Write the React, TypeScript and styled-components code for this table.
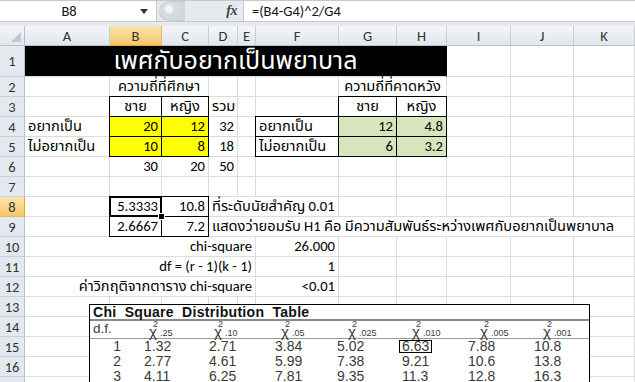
import React from "react";
import styled, { createGlobalStyle, css } from "styled-components";

const Global = createGlobalStyle`
  html, body { margin: 0; padding: 0; background: #fff; }
  body {
    width: 635px; height: 382px; overflow: hidden;
    font-family: Carlito, Calibri, Lato, "Noto Sans Thai", Tahoma, "DejaVu Sans", sans-serif;
  }
`;

const Window = styled.div`
  width: 635px;
  height: 382px;
  overflow: hidden;
  background: #e6e9ed;
  display: flex;
  flex-direction: column;
`;

const FormulaBar = styled.div`
  display: flex;
  height: 22px;
  box-sizing: border-box;
  border-top: 1px solid #c3c9d1;
  border-bottom: 1px solid #c3c9d1;
  background: #fff;
  flex: none;
`;

const NameBox = styled.div`
  width: 157px;
  display: flex;
  align-items: center;
  background: #fff;
  border-right: 1px solid #c3c9d1;
  box-sizing: border-box;
`;

const NameText = styled.span`
  flex: 1;
  text-align: center;
  font-size: 14.5px;
  color: #111;
  padding-left: 2px;
`;

const DropArrow = styled.svg`
  width: 8px;
  height: 5px;
  margin: 0 8px 0 4px;
`;

const FxArea = styled.div`
  width: 86px;
  display: flex;
  align-items: center;
  justify-content: space-between;
  background: #e6e9ed;
  box-sizing: border-box;
`;

const Knob = styled.div`
  width: 26px;
  height: 20px;
  margin-left: 2px;
  border-radius: 10px 0 0 10px;
  background: radial-gradient(circle at 9px 7px, #f4f6f8 0 3px, #d9dde2 5px, #cfd4da 100%);
  border: 1px solid #c6ccd3;
  border-right: none;
  box-sizing: border-box;
`;

const FxLabel = styled.span`
  font-family: "Liberation Serif", serif;
  font-style: italic;
  font-weight: bold;
  font-size: 14px;
  color: #444;
  margin-right: 6px;
  letter-spacing: -0.5px;
`;

const FormulaInput = styled.div`
  flex: 1;
  display: flex;
  align-items: center;
  padding-left: 8px;
  border-left: 1px solid #c3c9d1;
  font-size: 14.5px;
  color: #111;
  background: #fff;
`;

const Gap = styled.div`
  height: 4px;
  flex: none;
`;

const Sheet = styled.div`
  position: relative;
  display: grid;
  grid-template-columns: 25px 85px 52px 47px 29px 18px 83px 58px 50px 64px 63px 1fr;
  grid-template-rows: 20px 31px repeat(16, 20px);
  background: #fff;
  font-size: 14.67px;
  color: #000;
`;

const headerBase = css<{ $active?: boolean }>`
  box-sizing: border-box;
  display: flex;
  align-items: center;
  justify-content: center;
  color: #333;
  font-size: 14.5px;
  background: ${(p) =>
    p.$active ? "linear-gradient(#fbe3ad, #f6c86c)" : "linear-gradient(#f3f5f8, #e2e7ed)"};
`;

const Corner = styled.div`
  box-sizing: border-box;
  background: linear-gradient(#f3f5f8, #e2e7ed);
  border-right: 1px solid #b9c1cb;
  border-bottom: 1px solid #b9c1cb;
  display: flex;
  align-items: flex-end;
  justify-content: flex-end;
  padding: 0 3px 3px 0;
`;

const ColHeader = styled.div<{ $active?: boolean }>`
  ${headerBase};
  border-right: 1px solid ${(p) => (p.$active ? "#e9b85a" : "#c7cdd5")};
  border-bottom: 1px solid ${(p) => (p.$active ? "#e3a53b" : "#b9c1cb")};
`;

const RowHeader = styled.div<{ $active?: boolean }>`
  ${headerBase};
  background: ${(p) => (p.$active ? "linear-gradient(#fbe3ad, #f6c86c)" : "#e4e9ef")};
  border-right: 1px solid ${(p) => (p.$active ? "#e3a53b" : "#b9c1cb")};
  border-bottom: 1px solid ${(p) => (p.$active ? "#e9b85a" : "#c9d0d8")};
`;

type Align = "left" | "right" | "center";
type Fill = "yellow" | "green" | "black";

const fills: Record<Fill, string> = {
  yellow: "#ffff00",
  green: "#d7e4bc",
  black: "#000000",
};

const Cell = styled.div<{
  $span: number;
  $align: Align;
  $fill?: Fill;
  $box?: boolean;
  $active?: boolean;
  $big?: boolean;
}>`
  position: relative;
  grid-column: span ${(p) => p.$span};
  box-sizing: border-box;
  min-width: 0;
  border-right: 1px solid ${(p) => (p.$fill === "black" ? "#000" : "#dadcdd")};
  border-bottom: 1px solid #dadcdd;
  background: ${(p) => (p.$fill ? fills[p.$fill] : "transparent")};
  padding: 0 3px 1px;
  display: flex;
  align-items: flex-end;
  justify-content: ${(p) =>
    p.$align === "right" ? "flex-end" : p.$align === "center" ? "center" : "flex-start"};
  white-space: nowrap;
  line-height: 18px;
  color: ${(p) => (p.$fill === "black" ? "#fff" : "#000")};
  ${(p) =>
    p.$big &&
    css`
      font-size: 25px;
      line-height: 30px;
      align-items: center;
      padding: 0;
    `}
  ${(p) =>
    p.$box &&
    css`
      &::after {
        content: "";
        position: absolute;
        top: -1px;
        left: -1px;
        right: -1px;
        bottom: -1px;
        border: 1px solid #000;
        pointer-events: none;
      }
    `}
  ${(p) =>
    p.$active &&
    css`
      &::after {
        border-width: 2px;
        z-index: 2;
      }
      &::before {
        content: "";
        position: absolute;
        right: -4px;
        bottom: -4px;
        width: 5px;
        height: 5px;
        background: #000;
        border: 1px solid #fff;
        z-index: 3;
      }
    `}
`;

interface CellSpec {
  span?: number;
  text?: string;
  align?: Align;
  fill?: Fill;
  box?: boolean;
  active?: boolean;
  big?: boolean;
}

const COLS = ["A", "B", "C", "D", "E", "F", "G", "H", "I", "J", "K"];
const ROW_COUNT = 17;

const num = (text: string, extra: CellSpec = {}): CellSpec => ({ text, align: "right", ...extra });

const DATA: Record<number, Record<number, CellSpec>> = {
  1: { 0: { span: 8, text: "เพศกับอยากเป็นพยาบาล", align: "center", fill: "black", big: true } },
  2: {
    1: { span: 2, text: "ความถี่ที่ศึกษา", align: "center" },
    6: { span: 2, text: "ความถี่ที่คาดหวัง", align: "center" },
  },
  3: {
    1: { text: "ชาย", align: "center", box: true },
    2: { text: "หญิง", align: "center", box: true },
    3: { text: "รวม" },
    6: { text: "ชาย", align: "center", box: true },
    7: { text: "หญิง", align: "center", box: true },
  },
  4: {
    0: { text: "อยากเป็น" },
    1: num("20", { fill: "yellow", box: true }),
    2: num("12", { fill: "yellow", box: true }),
    3: num("32"),
    5: { text: "อยากเป็น", box: true },
    6: num("12", { fill: "green", box: true }),
    7: num("4.8", { fill: "green", box: true }),
  },
  5: {
    0: { text: "ไม่อยากเป็น" },
    1: num("10", { fill: "yellow", box: true }),
    2: num("8", { fill: "yellow", box: true }),
    3: num("18"),
    5: { text: "ไม่อยากเป็น", box: true },
    6: num("6", { fill: "green", box: true }),
    7: num("3.2", { fill: "green", box: true }),
  },
  6: { 1: num("30"), 2: num("20"), 3: num("50") },
  8: {
    1: num("5.3333", { box: true, active: true }),
    2: num("10.8", { box: true }),
    3: { span: 3, text: "ที่ระดับนัยสำคัญ 0.01" },
  },
  9: {
    1: num("2.6667", { box: true }),
    2: num("7.2", { box: true }),
    3: { span: 8, text: "แสดงว่ายอมรับ H1 คือ มีความสัมพันธ์ระหว่างเพศกับอยากเป็นพยาบาล" },
  },
  10: { 0: num("chi-square", { span: 5 }), 5: num("26.000") },
  11: { 0: num("df = (r - 1)(k - 1)", { span: 5 }), 5: num("1") },
  12: { 0: num("ค่าวิกฤติจากตาราง chi-square", { span: 5 }), 5: num("<0.01") },
};

/* ---------- Chi square table picture ---------- */

const ChiTable = styled.div`
  position: absolute;
  left: 89px;
  top: 278px;
  width: 501px;
  height: 110px;
  box-sizing: border-box;
  background: #fff;
  border: 1px solid #000;
  border-bottom: none;
  font-family: "Liberation Sans", Arial, sans-serif;
  color: #3a3a3a;
  z-index: 5;
`;

const ChiTitle = styled.div`
  height: 16px;
  box-sizing: border-box;
  border-bottom: 2px solid #8a8a8a;
  padding-left: 3px;
  font-weight: bold;
  font-size: 14px;
  line-height: 14px;
  word-spacing: 4px;
  letter-spacing: 0.3px;
  color: #111;
`;

const CHI_COLS = "48px 65px 66px 62px 65px 66px 66px 1fr";

const ChiHeadRow = styled.div`
  display: grid;
  grid-template-columns: ${CHI_COLS};
  height: 18px;
  box-sizing: border-box;
  border-bottom: 1px solid #9a9a9a;
`;

const ChiHeadCell = styled.div<{ $indent: number }>`
  display: flex;
  align-items: flex-start;
  padding-left: ${(p) => p.$indent}px;
`;

const DfLabel = styled.span`
  padding-left: 3px;
  align-self: center;
  font-size: 13.5px;
  line-height: 16px;
`;

const Chi = styled.span`
  display: inline-flex;
  flex-direction: column;
  align-items: center;
`;

const ChiSup = styled.span`
  font-size: 9px;
  line-height: 6px;
  margin: 0 0 0 5px;
`;

const ChiGlyph = styled.span`
  font-size: 15px;
  line-height: 9px;
  font-family: "Liberation Sans", sans-serif;
`;

const ChiSub = styled.span`
  align-self: flex-end;
  font-size: 9px;
  line-height: 8px;
  margin: 0 0 1px 2px;
`;

const ChiRow = styled.div`
  display: grid;
  grid-template-columns: ${CHI_COLS};
  height: 15px;
  font-size: 14px;
  line-height: 15px;
`;

const ChiDf = styled.div`
  text-align: right;
  padding-right: 17px;
`;

const ChiVal = styled.div`
  padding-left: 6px;
  display: flex;
  align-items: center;
`;

const Boxed = styled.span`
  border: 1px solid #000;
  line-height: 11px;
  padding: 0 2px;
  margin-left: -3px;
`;

const HEAD = [
  { sub: ".25", indent: 10 },
  { sub: ".10", indent: 10 },
  { sub: ".05", indent: 11 },
  { sub: ".025", indent: 16 },
  { sub: ".010", indent: 15 },
  { sub: ".005", indent: 17 },
  { sub: ".001", indent: 14 },
];

const CHI_ROWS = [
  ["1", "1.32", "2.71", "3.84", "5.02", "6.63", "7.88", "10.8"],
  ["2", "2.77", "4.61", "5.99", "7.38", "9.21", "10.6", "13.8"],
  ["3", "4.11", "6.25", "7.81", "9.35", "11.3", "12.8", "16.3"],
];

function ChiSquareTable() {
  return (
    <ChiTable>
      <ChiTitle>Chi Square Distribution Table</ChiTitle>
      <ChiHeadRow>
        <DfLabel>d.f.</DfLabel>
        {HEAD.map((h) => (
          <ChiHeadCell key={h.sub} $indent={h.indent}>
            <Chi>
              <ChiSup>2</ChiSup>
              <ChiGlyph>χ</ChiGlyph>
            </Chi>
            <ChiSub>{h.sub}</ChiSub>
          </ChiHeadCell>
        ))}
        <div />
      </ChiHeadRow>
      {CHI_ROWS.map((row) => (
        <ChiRow key={row[0]}>
          <ChiDf>{row[0]}</ChiDf>
          {row.slice(1).map((v, i) => (
            <ChiVal key={i}>{v === "6.63" ? <Boxed>{v}</Boxed> : v}</ChiVal>
          ))}
        </ChiRow>
      ))}
    </ChiTable>
  );
}

export default function App() {
  const cells: React.ReactNode[] = [];
  cells.push(
    <Corner key="corner">
      <svg width="10" height="10" viewBox="0 0 10 10">
        <path d="M10 0 L10 10 L0 10 Z" fill="#c3c8cf" />
      </svg>
    </Corner>
  );
  COLS.forEach((c) =>
    cells.push(
      <ColHeader key={`h${c}`} $active={c === "B"}>
        {c}
      </ColHeader>
    )
  );
  for (let r = 1; r <= ROW_COUNT; r++) {
    cells.push(
      <RowHeader key={`r${r}`} $active={r === 8}>
        {r}
      </RowHeader>
    );
    const specs = DATA[r] || {};
    let c = 0;
    while (c < COLS.length) {
      const s = specs[c] || {};
      const span = s.span ?? 1;
      cells.push(
        <Cell
          key={`${r}-${c}`}
          $span={span}
          $align={s.align ?? "left"}
          $fill={s.fill}
          $box={s.box}
          $active={s.active}
          $big={s.big}
        >
          {s.text}
        </Cell>
      );
      c += span;
    }
  }

  return (
    <Window>
      <Global />
      <FormulaBar>
        <NameBox>
          <NameText>B8</NameText>
          <DropArrow viewBox="0 0 8 5">
            <path d="M0 0 L8 0 L4 5 Z" fill="#333" />
          </DropArrow>
        </NameBox>
        <FxArea>
          <Knob />
          <FxLabel>fx</FxLabel>
        </FxArea>
        <FormulaInput>=(B4-G4)^2/G4</FormulaInput>
      </FormulaBar>
      <Gap />
      <Sheet>
        {cells}
        <ChiSquareTable />
      </Sheet>
    </Window>
  );
}
